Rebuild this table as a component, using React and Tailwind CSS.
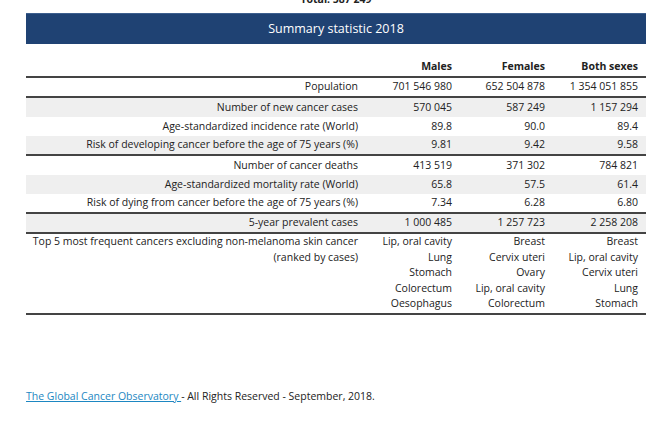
export default function App() {
  const font = { fontFamily: '"Open Sans", "Noto Sans", sans-serif' };
  const rows = [
    { label: "Population", v: ["701 546 980", "652 504 878", "1 354 051 855"], gray: false, line: true },
    { label: "Number of new cancer cases", v: ["570 045", "587 249", "1 157 294"], gray: true },
    { label: "Age-standardized incidence rate (World)", v: ["89.8", "90.0", "89.4"], gray: false },
    { label: "Risk of developing cancer before the age of 75 years (%)", v: ["9.81", "9.42", "9.58"], gray: true, line: true },
    { label: "Number of cancer deaths", v: ["413 519", "371 302", "784 821"], gray: false },
    { label: "Age-standardized mortality rate (World)", v: ["65.8", "57.5", "61.4"], gray: true },
    { label: "Risk of dying from cancer before the age of 75 years (%)", v: ["7.34", "6.28", "6.80"], gray: false, line: true },
    { label: "5-year prevalent cases", v: ["1 000 485", "1 257 723", "2 258 208"], gray: true, line: true },
  ];
  const top5 = [
    ["Lip, oral cavity", "Lung", "Stomach", "Colorectum", "Oesophagus"],
    ["Breast", "Cervix uteri", "Ovary", "Lip, oral cavity", "Colorectum"],
    ["Breast", "Lip, oral cavity", "Cervix uteri", "Lung", "Stomach"],
  ];
  return (
    <div className="w-[662px] h-[423px] overflow-hidden bg-white text-[#222] text-[10.5px]" style={font}>
      <div className="ml-[26px] w-[620px]">
        <div className="-mt-[8px] h-[21px] text-center font-bold text-[10.5px] leading-[15px]">Total: 587 249</div>
        <div className="h-[31px] bg-[#1f4273] border-t border-[#3d5f8e] flex items-center justify-center text-white text-[12.5px]">
          Summary statistic 2018
        </div>
        <div className="mt-[14px] grid grid-cols-[340px_94px_93px_93px] h-[18px] items-center font-bold">
          <div></div>
          <div className="text-right pr-[8px]">Males</div>
          <div className="text-right pr-[8px]">Females</div>
          <div className="text-right pr-[8px]">Both sexes</div>
        </div>
        <div className="h-[2px] bg-[#444]"></div>
        {rows.map((r, i) => (
          <div key={i}>
            <div className={`grid grid-cols-[340px_94px_93px_93px] items-center ${r.line ? "h-[18px]" : "h-[19px]"} ${r.gray ? "bg-[#efefef]" : ""}`}>
              <div className="text-right pr-[8px] whitespace-nowrap">{r.label}</div>
              {r.v.map((x, j) => (
                <div key={j} className="text-right pr-[8px]">{x}</div>
              ))}
            </div>
            {r.line && <div className="h-[2px] bg-[#444]"></div>}
          </div>
        ))}
        <div className="grid grid-cols-[340px_94px_93px_93px] pt-0 pb-[1px] leading-[15.5px]">
          <div className="text-right pr-[8px] whitespace-nowrap">
            Top 5 most frequent cancers excluding non-melanoma skin cancer
            <br />
            (ranked by cases)
          </div>
          {top5.map((c, j) => (
            <div key={j} className="text-right pr-[8px] flex flex-col whitespace-nowrap">
              {c.map((x, k) => (
                <span key={k}>{x}</span>
              ))}
            </div>
          ))}
        </div>
        <div className="h-[2px] bg-[#444]"></div>
        <div className="mt-[74px]">
          <a href="#" className="text-[#1d87c2] underline">The Global Cancer Observatory </a>
          <span> - All Rights Reserved - September, 2018.</span>
        </div>
      </div>
    </div>
  );
}
